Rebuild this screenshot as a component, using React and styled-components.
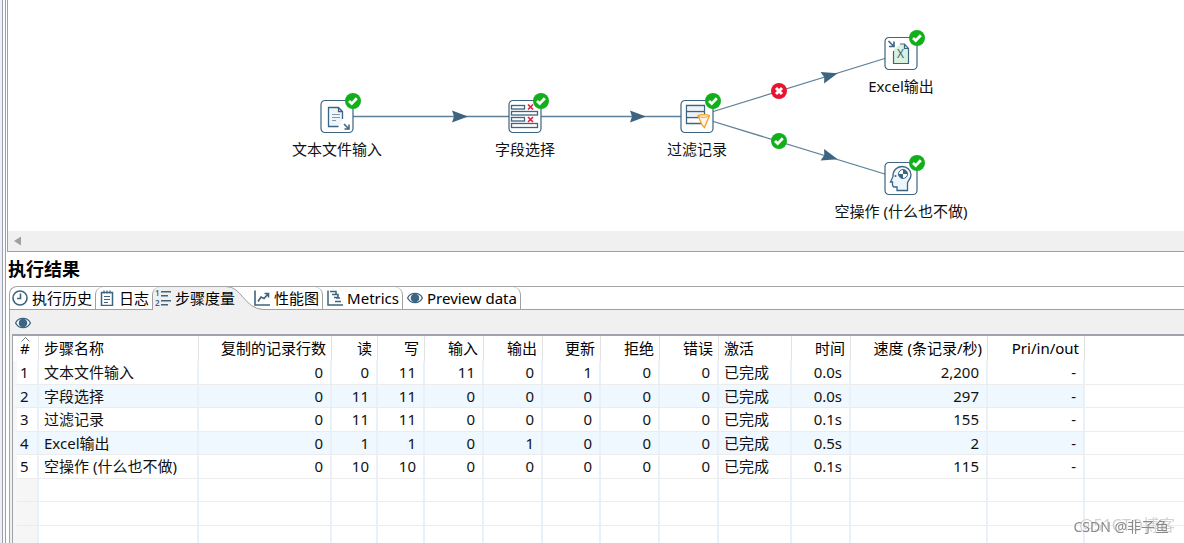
import React, { useState } from "react";
import styled, { createGlobalStyle, css } from "styled-components";

const GlobalStyle = createGlobalStyle`
  * {
    box-sizing: border-box;
  }
  body {
    margin: 0;
    background: #fff;
    color: #111;
    font-family: "Noto Sans", "Noto Sans CJK SC", sans-serif;
    font-size: 15px;
    line-height: 20px;
  }
`;

const INK = "#3d6480";

const Page = styled.div`
  display: flex;
  height: 100vh;
  overflow: hidden;
`;
const Sash = styled.div`
  flex: none;
  width: 6px;
  background: #fafafa;
  border-left: 2px solid #eef0f6;
  border-right: 1px solid #a0a0a0;

  &::before {
    content: "";
    display: block;
    width: 1px;
    height: 100%;
    background: #9a9fae;
  }
`;
const Main = styled.main`
  flex: 1;
  min-width: 0;
  display: flex;
  flex-direction: column;
  padding-left: 1px;
`;

/* ---------- canvas ---------- */
const CanvasPane = styled.section`
  flex: none;
  border-left: 1px solid #a0a0a0;
  border-bottom: 1px solid #a0a0a0;
`;
const Canvas = styled.div`
  position: relative;
  height: 231px;
  overflow: hidden;
`;
const Hops = styled.svg`
  position: absolute;
  left: 0;
  top: 0;
  width: 100%;
  height: 100%;
`;
const Node = styled.div`
  position: absolute;
  left: ${({ $x }) => $x}px;
  top: ${({ $y }) => $y}px;
  display: flex;
  flex-direction: column;
  align-items: center;
  gap: 5px;
  width: 34px;
  white-space: nowrap;

  svg {
    flex: none;
    display: block;
    overflow: visible;
  }
`;
const ScrollBar = styled.div`
  display: flex;
  align-items: center;
  height: 20px;
  padding-left: 4px;
  background: #f0f0f0;
`;
const ScrollButton = styled.button`
  display: flex;
  padding: 0 2px;
  border: 0;
  background: none;
`;

/* ---------- results ---------- */
const Title = styled.h2`
  flex: none;
  height: 34px;
  margin: 0;
  padding-left: 1px;
  font-size: 18px;
  font-weight: 700;
  line-height: 34px;
  color: #000;
`;
const Folder = styled.section`
  flex: 1;
  min-height: 0;
  display: flex;
  flex-direction: column;
  margin-left: 2px;
  border-top: 1px solid #a5a5a5;
  border-left: 1px solid #a5a5a5;
  border-top-left-radius: 8px;
`;
const TabBar = styled.div`
  flex: none;
  position: relative;
  z-index: 0;
  display: flex;
  height: 23px;
  border-bottom: 1px solid #a0a0a0;
`;
const Tab = styled.button`
  position: relative;
  display: flex;
  align-items: center;
  gap: 4px;
  height: 22px;
  padding: 0 3px 0 2px;
  border: 0 solid #a0a0a0;
  background: none;
  color: #000;
  font: inherit;
  white-space: nowrap;

  svg {
    flex: none;
  }
  ${({ $edge }) => $edge === "left" && css`
    padding: 0 3px;
    border-left-width: 1px;
    border-top-left-radius: 8px;
  `}
  ${({ $edge }) => $edge === "right" && css`
    padding: 0 3px 0 4px;
    border-right-width: 1px;
    border-top-right-radius: 8px;
  `}
  ${({ $selected }) => $selected && css`
    margin-right: 12px;
    padding-left: 2px;

    &::before {
      content: "";
      position: absolute;
      z-index: -1;
      left: 0;
      right: 12px;
      top: 0;
      bottom: -1px;
      border-top-left-radius: 8px;
      background: #f0f0f0;
    }
  `}
`;
const Slope = styled.svg`
  position: absolute;
  right: -26px;
  top: -1px;
  z-index: -1;
`;
const ToolBar = styled.div`
  flex: none;
  display: flex;
  align-items: center;
  height: 24px;
  padding: 1px 0 0 5px;
  background: #f0f0f0;

  button {
    display: flex;
    padding: 0;
    border: 0;
    background: none;
  }
`;
const TableBox = styled.div`
  flex: 1;
  min-height: 0;
  overflow: hidden;
  padding-left: 2px;
  background: #f0f0f0;
`;
const Table = styled.table`
  width: 100%;
  table-layout: fixed;
  border-collapse: separate;
  border-spacing: 0;
  border-top: 2px solid #a0a3ab;
  border-left: 1px solid #a0a3ab;
  background: #fff;

  th,
  td {
    padding: 0 7px 1px 5px;
    border-right: 2px solid #eaf0f7;
    text-align: left;
    font-weight: 400;
    white-space: nowrap;
  }
  th {
    height: 25px;
    padding-right: 5px;
    border-right: 1px solid #e2e2e2;
    color: #000;
  }
  td {
    border-bottom: 1px solid #ececec;
  }
  th:last-child,
  td:last-child {
    border-right: 0;
  }
`;
const Row = styled.tr`
  height: ${({ $even }) => ($even ? 23 : 24)}px;

  td {
    background: ${({ $even, $blank }) => ($even && !$blank ? "#eff7ff" : "#fff")};
  }
  td:last-child {
    background: #fff;
  }
  td:first-child {
    border-left: 4px solid #f7f7f7;
    padding-left: 3px;
    background: ${({ $blank }) => $blank && "#f6f6f6"};
  }
`;
const HeadCell = styled.th`
  && {
    text-align: ${({ $right }) => ($right ? "right" : "left")};
  }
  &:first-child {
    position: relative;
    padding-left: 7px;
  }
`;
const Cell = styled.td`
  && {
    text-align: ${({ $right }) => ($right ? "right" : "left")};
  }
`;
const SortMark = styled.svg`
  position: absolute;
  left: 8px;
  top: 1px;
`;
const Watermark = styled.div`
  position: fixed;
  right: ${({ $right }) => $right}px;
  bottom: ${({ $bottom }) => $bottom}px;
  font-size: ${({ $size }) => $size}px;
  line-height: 20px;
  color: ${({ $color }) => $color};
  text-shadow: 0 0 1px #fff;
  pointer-events: none;
`;

/* ---------- icons ---------- */
const Ok = ({ x, y }) => (
  <g transform={`translate(${x} ${y})`}>
    <circle r="8" fill="#11b01a" />
    <path d="M-4 0 L-1.3 2.6 L3.8 -2.8" fill="none" stroke="#fff" strokeWidth="2.8" />
  </g>
);
const Fail = ({ x, y }) => (
  <g transform={`translate(${x} ${y})`}>
    <circle r="8" fill="#e8132f" />
    <path d="M-3 -3 L3 3 M3 -3 L-3 3" stroke="#fff" strokeWidth="3" />
  </g>
);
const Arrow = ({ x, y, angle = 0 }) => (
  <path
    d="M-8 -6 L8 0 L-8 6 L-6 0 Z"
    fill={INK}
    transform={`translate(${x} ${y}) rotate(${angle})`}
  />
);

const glyphs = {
  textInput: (
    <>
      <path d="M8.5 7.5 H18.5 L22.5 11.5 V20 L19 26 H8.5 Z" fill="#eef6fb" />
      <path d="M22.5 19 V11.5 L18.5 7.5 H8.5 V26.5 H18.5 M18.5 7.5 V11.5 H22.5" fill="none" stroke={INK} strokeWidth="1.3" />
      <path d="M12 14.5 H20 M12 17.5 H20 M12 20.5 H16" stroke="#7d9bb0" strokeWidth="1.1" />
      <path d="M24 24 L28.5 28.5 M29 24.5 V29 H24.5" fill="none" stroke={INK} strokeWidth="1.5" />
    </>
  ),
  select: (
    <>
      <g fill="#fff" stroke={INK} strokeWidth="1.3">
        <rect x="3.5" y="5.5" width="13" height="3.5" />
        <rect x="3.5" y="11.5" width="26" height="3.5" />
        <rect x="3.5" y="17.5" width="13" height="3.5" />
        <rect x="3.5" y="23.5" width="26" height="4" />
      </g>
      <path d="M20 4.5 L25 9.5 M25 4.5 L20 9.5 M20 17 L25 22 M25 17 L20 22" stroke="#e2203c" strokeWidth="1.7" />
    </>
  ),
  filter: (
    <>
      <path d="M6.5 5.5 H24.5 V23.5 H6.5 Z M6.5 11.5 H24.5 M6.5 17.5 H24.5" fill="#fff" stroke={INK} strokeWidth="1.3" />
      <path d="M7.5 7 H23.5 V10.5 H7.5 Z M7.5 13 H23.5 V16.5 H7.5 Z" fill="#e9f3fa" />
      <path d="M18 15.5 C20 14.3 27.5 14.3 29.5 15.5 L24.5 27.5 L22 25 Z" fill="#fff4e0" stroke="#f5a02c" strokeWidth="1.3" />
      <path d="M18 15.5 C20 18 27.5 18 29.5 15.5" fill="none" stroke="#f5a02c" />
    </>
  ),
  excel: (
    <>
      <path d="M9.5 13 L15.5 7.5 H20.5 L24.5 11.5 V26.5 H9.5 Z" fill="#d9f2dc" />
      <path d="M9.5 14 V26.5 H24.5 V11.5 L20.5 7 H16 M20.5 7 V11.5 H24.5" fill="none" stroke={INK} strokeWidth="1.2" />
      <text x="16.5" y="21" textAnchor="middle" fontSize="12" fill={INK}>X</text>
      <path d="M4.5 4 L9.5 9 M10 4.5 V9.5 H5" fill="none" stroke={INK} strokeWidth="1.6" />
    </>
  ),
  dummy: (
    <>
      <path d="M13 28.5 V25 H10.5 C9 25 8.5 24 8.5 22.5 V20 H6.5 L9 14.5 C8.5 8.5 13 4.5 18 4.5 C23.5 4.5 27 8.5 27 13 C27 17 24 18.5 23.5 21 V28.5 Z" fill="#edf6fc" stroke={INK} strokeWidth="1.3" />
      <circle cx="19" cy="12" r="4.5" fill="#fff" stroke={INK} />
      <path d="M19 12 V7.5 A4.5 4.5 0 0 1 23.5 12 Z M19 12 V16.5 A4.5 4.5 0 0 1 14.5 12 Z" fill={INK} />
      <circle cx="11.5" cy="14" r="1" fill={INK} />
    </>
  ),
};

const EyeIcon = () => (
  <svg width="16" height="16" viewBox="0 0 16 16">
    <path d="M0.6 8 C3.5 1.9 12.5 1.9 15.4 8 C12.5 14.1 3.5 14.1 0.6 8 Z" fill="#fff" stroke={INK} strokeWidth="1.3" />
    <circle cx="8" cy="8" r="4.3" fill={INK} />
  </svg>
);

const icons = {
  history: (
    <svg width="16" height="16" viewBox="0 0 16 16" fill="none" stroke={INK} strokeWidth="1.6">
      <circle cx="8" cy="8" r="7" />
      <path d="M8.5 3.5 V8.5 H5" />
    </svg>
  ),
  log: (
    <svg width="16" height="16" viewBox="0 0 16 16" fill="none" stroke={INK} strokeWidth="1.5">
      <rect x="2.5" y="2.5" width="11" height="13" fill="#fff" />
      <path d="M5 0.5 V3.5 M8 0.5 V3.5 M11 0.5 V3.5 M5 6.5 H11 M5 9.5 H11 M5 12.5 H9" strokeWidth="1.2" />
    </svg>
  ),
  steps: (
    <svg width="16" height="16" viewBox="0 0 16 16" fill={INK} stroke="none" overflow="visible">
      <path d="M6 1 H16 V2.4 H6 Z M6 5 H13 V6.4 H6 Z M6 10 H16 V11.4 H6 Z M6 14 H13 V15.4 H6 Z" />
      <text x="0" y="6" fontSize="8" fontWeight="600">1</text>
      <text x="0" y="16" fontSize="8" fontWeight="600">2</text>
    </svg>
  ),
  chart: (
    <svg width="16" height="16" viewBox="0 0 16 16" fill="none" stroke={INK} strokeWidth="1.6">
      <path d="M1 0.5 V15 H16" />
      <path d="M4 11.5 L7 7 L10 8.5 L14 4 M10.5 3.5 H14.5 V7.5" />
    </svg>
  ),
  metrics: (
    <svg width="16" height="16" viewBox="0 0 16 16" fill="none" stroke={INK} strokeWidth="1.5">
      <path d="M1 0.5 V15 H16" />
      <path d="M3 1.5 H9 V4.5 H5 M5 4.5 H11 V7.5 H7 M9 8 H13 M8 11.5 H14" />
    </svg>
  ),
  preview: <EyeIcon />,
};

/* ---------- data ---------- */
const nodes = [
  { x: 312, y: 100, glyph: "textInput", label: "文本文件输入" },
  { x: 500, y: 100, glyph: "select", label: "字段选择" },
  { x: 672, y: 100, glyph: "filter", label: "过滤记录" },
  { x: 876, y: 37, glyph: "excel", label: "Excel输出" },
  { x: 876, y: 162, glyph: "dummy", label: "空操作 (什么也不做)" },
];

const tabs = [
  { id: "history", label: "执行历史" },
  { id: "log", label: "日志", edge: "left" },
  { id: "steps", label: "步骤度量", edge: "left" },
  { id: "chart", label: "性能图", edge: "right" },
  { id: "metrics", label: "Metrics", edge: "right" },
  { id: "preview", label: "Preview data", edge: "right" },
];

const columns = [
  { label: "#", width: 26 },
  { label: "步骤名称", width: 160 },
  { label: "复制的记录行数", width: 133, right: true },
  { label: "读", width: 46, right: true },
  { label: "写", width: 47, right: true },
  { label: "输入", width: 59, right: true },
  { label: "输出", width: 59, right: true },
  { label: "更新", width: 58, right: true },
  { label: "拒绝", width: 59, right: true },
  { label: "错误", width: 59, right: true },
  { label: "激活", width: 73 },
  { label: "时间", width: 59, right: true },
  { label: "速度 (条记录/秒)", width: 137, right: true },
  { label: "Pri/in/out", width: 97, right: true },
];

const rows = [
  ["1", "文本文件输入", "0", "0", "11", "11", "0", "1", "0", "0", "已完成", "0.0s", "2,200", "-"],
  ["2", "字段选择", "0", "11", "11", "0", "0", "0", "0", "0", "已完成", "0.0s", "297", "-"],
  ["3", "过滤记录", "0", "11", "11", "0", "0", "0", "0", "0", "已完成", "0.1s", "155", "-"],
  ["4", "Excel输出", "0", "1", "1", "0", "1", "0", "0", "0", "已完成", "0.5s", "2", "-"],
  ["5", "空操作 (什么也不做)", "0", "10", "10", "0", "0", "0", "0", "0", "已完成", "0.1s", "115", "-"],
  [], [], [], [],
];

const TransCanvas = () => (
  <CanvasPane>
    <Canvas>
      <Hops>
        <g stroke="#5f8099" strokeWidth="1.3">
          <path d="M329 116.5 H689" />
          <path d="M689 116.5 L893 53.5" />
          <path d="M689 116.5 L893 179" />
        </g>
        <Arrow x={452} y={116.5} />
        <Arrow x={630} y={116.5} />
        <Arrow x={822} y={75.5} angle={-17} />
        <Arrow x={822} y={157} angle={17} />
        <Fail x={771} y={91} />
        <Ok x={771} y={141} />
      </Hops>
      {nodes.map(({ x, y, glyph, label }) => (
        <Node key={label} $x={x} $y={y}>
          <svg width="34" height="34" viewBox="0 0 34 34">
            <rect x="1" y="0.5" width="32" height="32" rx="4" fill="#fff" stroke={INK} strokeWidth="1.2" />
            {glyphs[glyph]}
            <Ok x={33} y={1} />
          </svg>
          <span>{label}</span>
        </Node>
      ))}
    </Canvas>
    <ScrollBar>
      <ScrollButton aria-label="向左滚动">
        <svg width="8" height="10" viewBox="0 0 8 10">
          <path d="M0 5 L7 0.5 V9.5 Z" fill="#a0a0a0" />
        </svg>
      </ScrollButton>
    </ScrollBar>
  </CanvasPane>
);

const StepMetrics = () => (
  <Table>
    <colgroup>
      {columns.map(({ label, width }) => (
        <col key={label} width={width} />
      ))}
      <col />
    </colgroup>
    <thead>
      <tr>
        {columns.map(({ label, right }) => (
          <HeadCell key={label} $right={right} scope="col">
            {label}
            {label === "#" && (
              <SortMark width="9" height="5" viewBox="0 0 9 5">
                <path d="M0.5 4.5 L4.5 0.5 L8.5 4.5" fill="none" stroke="#777" />
              </SortMark>
            )}
          </HeadCell>
        ))}
        <th />
      </tr>
    </thead>
    <tbody>
      {rows.map((row, i) => (
        <Row key={i} $even={i % 2 === 1} $blank={!row.length}>
          {columns.map(({ label, right }, c) => (
            <Cell key={label} $right={right}>{row[c]}</Cell>
          ))}
          <td />
        </Row>
      ))}
    </tbody>
  </Table>
);

const App = () => {
  const [selected, setSelected] = useState("steps");

  return (
    <>
      <GlobalStyle />
      <Page>
        <Sash />
        <Main>
          <TransCanvas />
          <Title>执行结果</Title>
          <Folder>
            <TabBar role="tablist">
              {tabs.map(({ id, label, edge }) => (
                <Tab
                  key={id}
                  role="tab"
                  aria-selected={id === selected}
                  $edge={edge}
                  $selected={id === selected}
                  onClick={() => setSelected(id)}
                >
                  {id === selected && (
                    <Slope width="38" height="24" viewBox="0 0 38 24">
                      <path d="M0 0.5 C16 0.5 18 22.5 37 23.5 V24 H0 Z" fill="#f0f0f0" />
                      <path d="M0 0.5 C16 0.5 18 22.5 37 23.5" fill="none" stroke="#a0a0a0" />
                    </Slope>
                  )}
                  {icons[id]}
                  {label}
                </Tab>
              ))}
            </TabBar>
            <ToolBar>
              <button aria-label="预览"><EyeIcon /></button>
            </ToolBar>
            <TableBox>
              <StepMetrics />
            </TableBox>
          </Folder>
        </Main>
      </Page>
      <Watermark $right={9} $bottom={8} $size={16} $color="#d2d2d2">@51CTO博客</Watermark>
      <Watermark $right={15} $bottom={6} $size={14} $color="#8a8a8a">CSDN @非子鱼</Watermark>
    </>
  );
};

export default App;
